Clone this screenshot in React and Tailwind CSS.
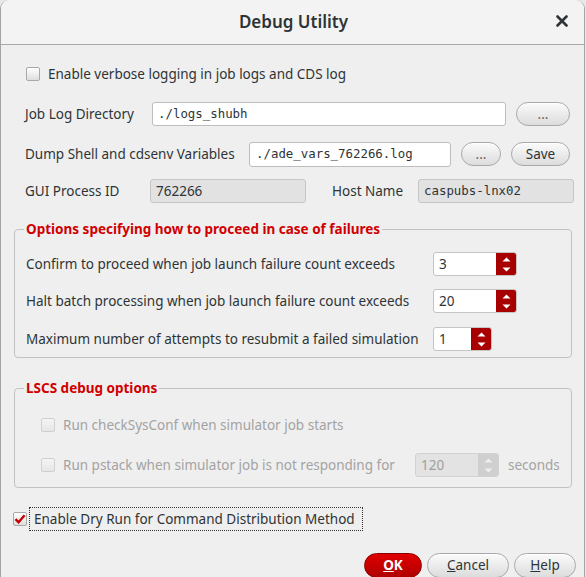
import React from "react";

function CheckBox({ checked = false, disabled = false }) {
  return (
    <div
      className={
        "w-[14px] h-[14px] flex-none rounded-[2px] border flex items-center justify-center " +
        (disabled
          ? "border-[#d0d0d0] bg-gradient-to-b from-[#f4f4f4] to-[#e6e6e6]"
          : "border-[#a9a9a9] bg-gradient-to-b from-[#ffffff] to-[#dedede]")
      }
    >
      {checked && (
        <svg width="12" height="12" viewBox="0 0 12 12">
          <path d="M1.5 6.2 L4.6 9.3 L10.6 2.2" fill="none" stroke="#c80000" strokeWidth="2.4" />
        </svg>
      )}
    </div>
  );
}

function PillButton({ children, className = "" }) {
  return (
    <div
      className={
        "h-[24px] flex-none rounded-full border border-[#a9a9a9] bg-gradient-to-b from-[#fbfbfb] to-[#dcdcdc] flex items-center justify-center text-[13.5px] text-[#2e3436] shadow-[inset_0_1px_0_#ffffff] " +
        className
      }
    >
      {children}
    </div>
  );
}

function SpinBox({ value, width, disabled = false }) {
  return (
    <div
      className={
        "h-[24px] flex-none flex rounded-[3px] border overflow-hidden " +
        (disabled ? "border-[#d2d2d2] bg-[#e3e3e3]" : "border-[#c4c4c4] bg-white") +
        " " +
        width
      }
    >
      <div
        className={
          "flex-1 flex items-center pl-[5px] text-[13.5px] " +
          (disabled ? "text-[#a0a0a0]" : "text-[#2e3436]")
        }
      >
        {value}
      </div>
      <div
        className={
          "w-[20px] flex-none flex flex-col items-center justify-center gap-[5px] " +
          (disabled ? "bg-[#cfcfcf]" : "bg-[#a80000]")
        }
      >
        <svg width="9" height="5" viewBox="0 0 9 5">
          <path d="M0.5 4.5 L4.5 0.5 L8.5 4.5 Z" fill={disabled ? "#eeeeee" : "#ffffff"} />
        </svg>
        <svg width="9" height="5" viewBox="0 0 9 5">
          <path d="M0.5 0.5 L4.5 4.5 L8.5 0.5 Z" fill={disabled ? "#eeeeee" : "#ffffff"} />
        </svg>
      </div>
    </div>
  );
}

export default function App() {
  return (
    <div className="w-[586px] h-[577px] bg-[#e8e8e8] overflow-hidden font-['Noto_Sans',sans-serif] text-[13.5px] text-[#2e3436]">
      <div className="w-[585px] h-[577px] bg-[#efefef] border-l border-r border-[#a4a4a4] rounded-t-[9px] overflow-hidden flex flex-col">
        {/* Title bar */}
        <div className="h-[45px] flex-none bg-[#f3f3f3] border-b border-[#a9a9a9] flex items-center relative">
          <div className="flex-1 text-center text-[17px] font-semibold text-[#2e3436] pl-[2px]">Debug Utility</div>
          <div className="absolute right-[16px] top-[15px]">
            <svg width="12" height="12" viewBox="0 0 12 12">
              <path d="M1.5 1.5 L10.5 10.5 M10.5 1.5 L1.5 10.5" stroke="#2e3436" strokeWidth="2.6" strokeLinecap="round" />
            </svg>
          </div>
        </div>

        {/* Verbose checkbox */}
        <div className="mt-[19px] h-[20px] flex items-center pl-[25px] gap-[8px]">
          <CheckBox />
          <span>Enable verbose logging in job logs and CDS log</span>
        </div>

        {/* Job Log Directory */}
        <div className="mt-[18px] h-[24px] flex items-center pl-[24px]">
          <div className="w-[127px] flex-none">Job Log Directory</div>
          <div className="w-[354px] h-[24px] flex-none bg-white border border-[#bdbdbd] rounded-[3px] flex items-center pl-[5px] font-['DejaVu_Sans_Mono',monospace] text-[12.4px]">
            ./logs_shubh
          </div>
          <PillButton className="ml-[10px] w-[54px] text-[10px] text-[#666]">...</PillButton>
        </div>

        {/* Dump shell */}
        <div className="mt-[16px] h-[24px] flex items-center pl-[24px]">
          <div className="w-[224px] flex-none">Dump Shell and cdsenv Variables</div>
          <div className="w-[202px] h-[25px] flex-none bg-white border border-[#bdbdbd] rounded-[3px] flex items-center pl-[6px] font-['DejaVu_Sans_Mono',monospace] text-[12.4px]">
            ./ade_vars_762266.log
          </div>
          <PillButton className="ml-[10px] w-[40px] text-[10px] text-[#666]">...</PillButton>
          <PillButton className="ml-[10px] w-[59px]">Save</PillButton>
        </div>

        {/* GUI Process ID */}
        <div className="mt-[13px] h-[24px] flex items-center pl-[24px]">
          <div className="w-[125px] flex-none">GUI Process ID</div>
          <div className="w-[156px] h-[24px] flex-none bg-[#e2e2e2] border border-[#c6c6c6] rounded-[3px] flex items-center pl-[5px]">
            762266
          </div>
          <div className="ml-[26px] w-[86px] flex-none">Host Name</div>
          <div className="w-[156px] h-[24px] flex-none bg-[#e2e2e2] border border-[#c6c6c6] rounded-[3px] flex items-center pl-[5px] font-['DejaVu_Sans_Mono',monospace] text-[12.4px]">
            caspubs-lnx02
          </div>
        </div>

        {/* Group 1 */}
        <fieldset className="mt-[17px] ml-[13px] w-[558px] border border-[#c2c2c2] rounded-[4px] pl-[11px] pb-[6px]">
          <legend className="ml-[-2px] px-[2px] text-[13.5px] font-bold text-[#d00000] leading-[18px]">
            Options specifying how to proceed in case of failures
          </legend>
          <div className="mt-[14px] h-[24px] flex items-center">
            <div className="w-[407px] flex-none">Confirm to proceed when job launch failure count exceeds</div>
            <SpinBox value="3" width="w-[84px]" />
          </div>
          <div className="mt-[13px] h-[24px] flex items-center">
            <div className="w-[407px] flex-none">Halt batch processing when job launch failure count exceeds</div>
            <SpinBox value="20" width="w-[84px]" />
          </div>
          <div className="mt-[14px] h-[24px] flex items-center">
            <div className="w-[407px] flex-none">Maximum number of attempts to resubmit a failed simulation</div>
            <SpinBox value="1" width="w-[59px]" />
          </div>
        </fieldset>

        {/* Group 2 */}
        <fieldset className="mt-[21px] ml-[13px] w-[558px] border border-[#c2c2c2] rounded-[4px] pl-[11px] pb-[10px]">
          <legend className="ml-[-2px] px-[2px] text-[13.5px] font-bold text-[#d00000] leading-[18px]">
            LSCS debug options
          </legend>
          <div className="mt-[16px] h-[24px] flex items-center gap-[8px] pl-[15px] text-[#a3a3a3]">
            <CheckBox disabled />
            <span>Run checkSysConf when simulator job starts</span>
          </div>
          <div className="mt-[16px] h-[24px] flex items-center pl-[15px] text-[#a3a3a3]">
            <CheckBox disabled />
            <span className="ml-[8px] w-[352px] flex-none">Run pstack when simulator job is not responding for</span>
            <SpinBox value="120" width="w-[84px]" disabled />
            <span className="ml-[9px]">seconds</span>
          </div>
        </fieldset>

        {/* Dry run */}
        <div className="mt-[19px] h-[24px] flex items-center pl-[12px]">
          <CheckBox checked />
          <div className="ml-[2px] h-[24px] w-[334px] border border-dotted border-[#333] flex items-center pl-[4px]">
            Enable Dry Run for Command Distribution Method
          </div>
        </div>

        {/* Buttons */}
        <div className="mt-[22px] flex items-center justify-end pr-[8px] gap-[5px]">
          <div className="h-[25px] w-[58px] rounded-full border border-[#8a0000] bg-gradient-to-b from-[#e00000] to-[#b00000] flex items-center justify-center text-white font-bold">
            <span><span className="underline">O</span>K</span>
          </div>
          <PillButton className="w-[82px] h-[25px]">
            <span><span className="underline">C</span>ancel</span>
          </PillButton>
          <PillButton className="w-[62px] h-[25px]">
            <span><span className="underline">H</span>elp</span>
          </PillButton>
        </div>
      </div>
    </div>
  );
}
